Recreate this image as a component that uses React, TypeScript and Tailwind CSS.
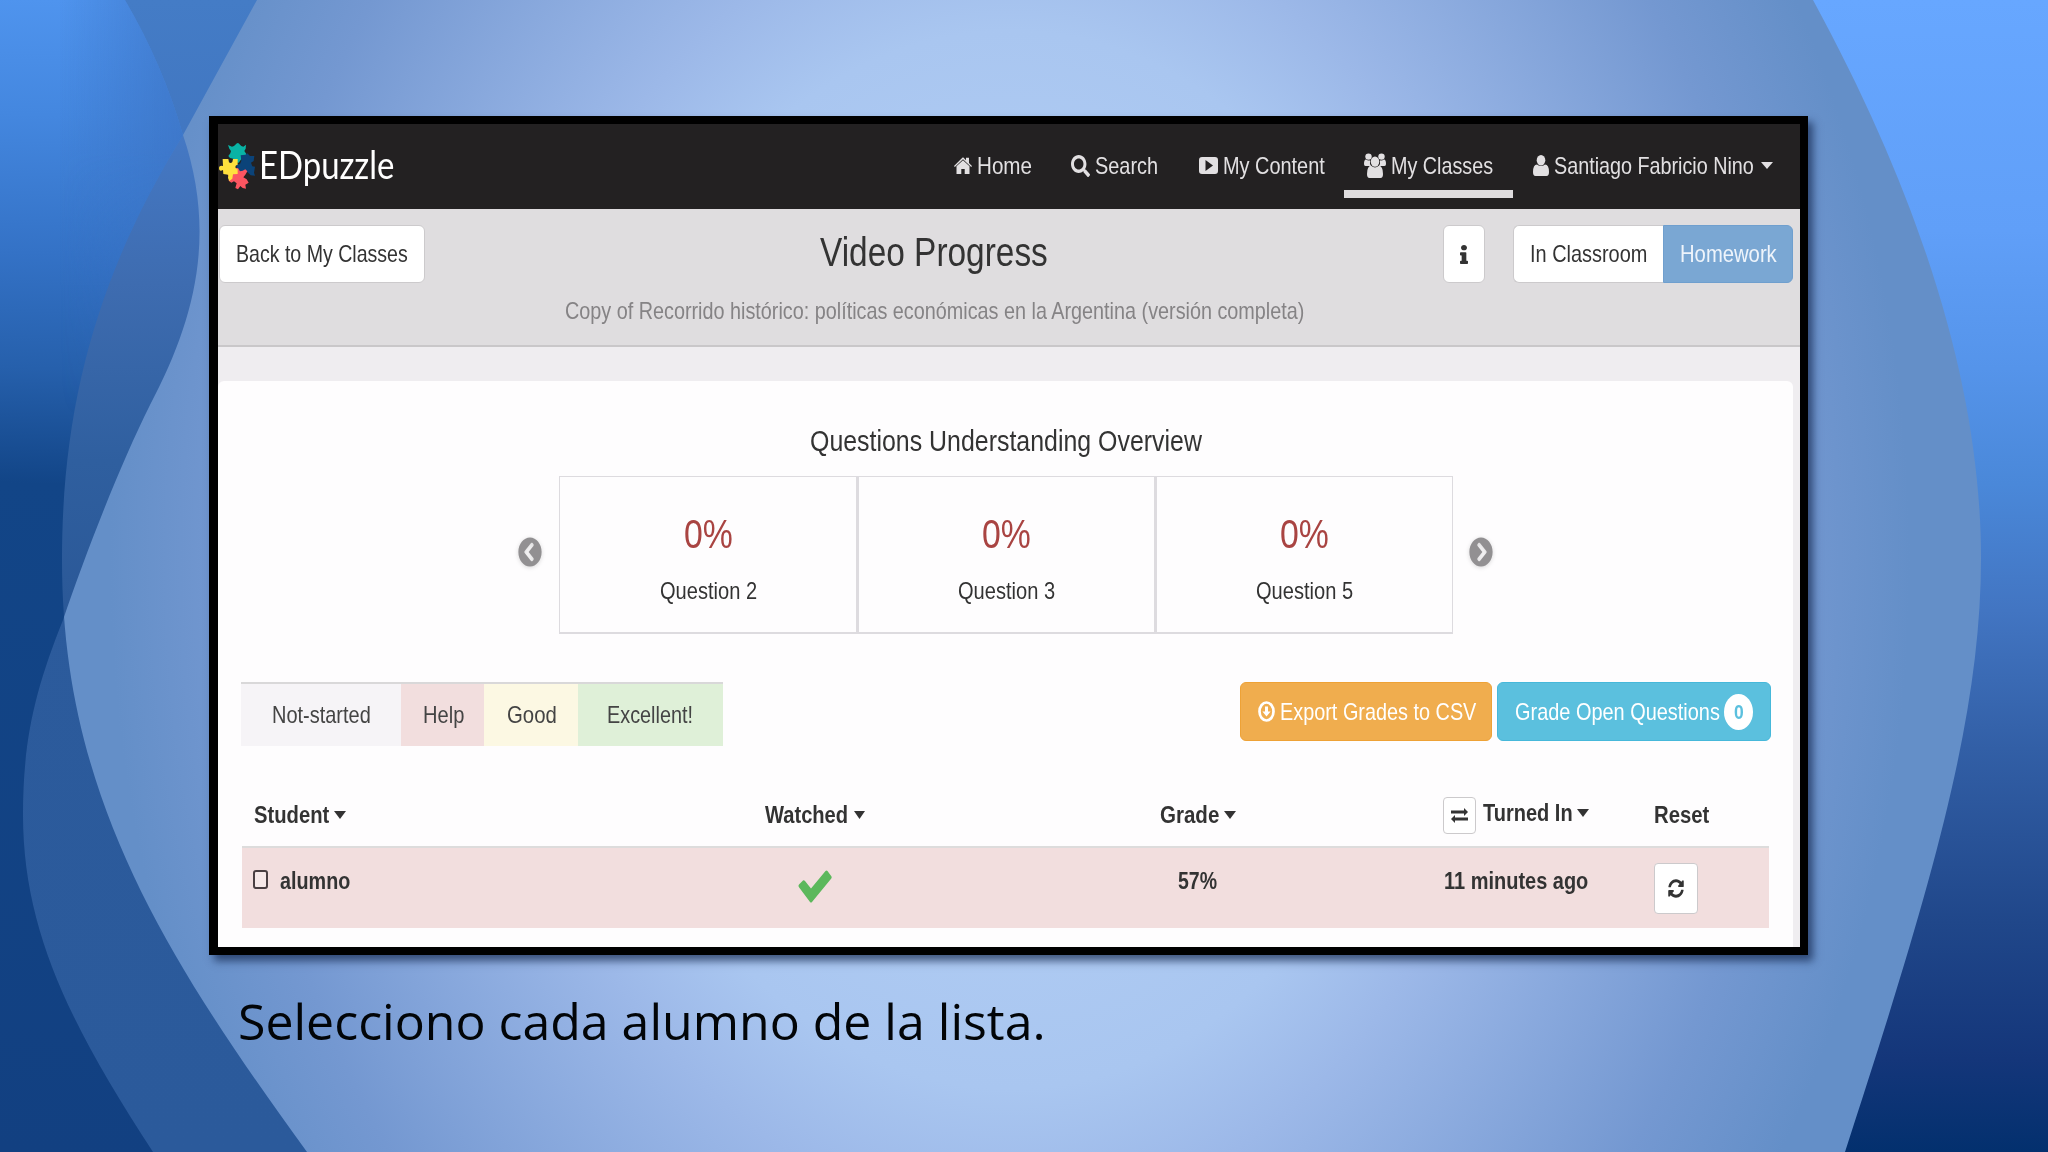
import { ReactNode, useLayoutEffect, useRef, useState } from 'react'
import clsx from 'clsx'
import {
  FaChevronCircleLeft,
  FaChevronCircleRight,
  FaInfo,
  FaSearch,
  FaSyncAlt,
} from 'react-icons/fa'

interface FitProps {
  w: number
  className?: string
  children: ReactNode
}

// Condenses a line of text so that it takes exactly `w` pixels
function Fit({ w, className, children }: FitProps) {
  const ref = useRef<HTMLSpanElement>(null)
  const [scale, setScale] = useState(1)

  useLayoutEffect(() => {
    if (ref.current) setScale(w / ref.current.offsetWidth)
  }, [w])

  return (
    <span className={clsx('block shrink-0 whitespace-nowrap', className)} style={{ width: w }}>
      <span ref={ref} className="inline-block origin-left" style={{ transform: `scaleX(${scale})` }}>
        {children}
      </span>
    </span>
  )
}

function Caret({ className }: { className?: string }) {
  return (
    <svg viewBox="0 0 12 8" preserveAspectRatio="none" className={clsx('h-2 w-3 shrink-0', className)}>
      <path d="M0 0h12L6 8z" fill="currentColor" />
    </svg>
  )
}

function Logo() {
  return (
    <svg viewBox="27 33 108 141" preserveAspectRatio="none" className="h-[47px] w-9 shrink-0">
      <path
        d="M54 39L66 44Q73 43 76 38Q84 28 90 38Q93 43 100 44L108 38L107 50L103 57L109 66L106 75L98 78L92 84L86 92L72 90L70 80L60 78L55 72L61 64L63 57L58 50z"
        fill="#09b3a5"
      />
      <path
        d="M92 70L106 68L112 64L120 72L133 72L131 87L123 92L127 103L135 104L132 122L135 131L122 130L112 120L96 124L80 116L80 98L90 96L94 86z"
        fill="#0b4379"
      />
      <path
        d="M66 108H84L90 118L98 116L106 112L112 118L106 128L100 136L110 142L116 152L106 158L108 170L98 168L91 162L84 172L76 168L80 154L72 148L64 152L56 146L58 134L52 126z"
        fill="#fb5561"
      />
      <path
        d="M38 81H55L57 91Q62 96 67 90L69 81H83V98Q76 99 76 105T83 112V126L69 127L67 140L58 147L54 138L55 128L40 126L39 114Q27 120 27 107Q28 99 39 102z"
        fill="#ffe03d"
      />
    </svg>
  )
}

function HomeIcon() {
  return (
    <svg viewBox="0 0 18 17" preserveAspectRatio="none" className="h-[17px] w-[18px] shrink-0">
      <path d="M0 9L8.6.6q.4-.4.8 0L12 3.200V.8h3v5.300L18 9l-.8 1L9 2.300.8 10z" fill="currentColor" />
      <path d="M9 3.300l6.500 6V17h-4.800v-5H7.300v5H2.500V9.300z" fill="currentColor" />
    </svg>
  )
}

function PlayIcon() {
  return (
    <svg viewBox="0 0 19 17" preserveAspectRatio="none" className="h-[17px] w-[19px] shrink-0">
      <path
        d="M3 0h13q3 0 3 3v11q0 3-3 3H3q-3 0-3-3V3q0-3 3-3zM6.500 3v11l7.500-5.500z"
        fill="currentColor"
        fillRule="evenodd"
      />
    </svg>
  )
}

function GroupIcon() {
  return (
    <svg viewBox="0 0 22 25" preserveAspectRatio="none" className="h-[25px] w-[22px] shrink-0">
      <g fill="currentColor">
        <circle cx="4.500" cy="3.600" r="3.200" />
        <circle cx="17.500" cy="3.600" r="3.200" />
        <path d="M0 11q0-4.500 2-4.500 2 1.500 4 .8-.6 4 1.200 5.700H1.500Q0 13 0 11zM22 11q0-4.500-2-4.500-2 1.500-4 .8.600 4-1.200 5.700h5.700q1.500 0 1.500-2z" />
        <ellipse cx="11" cy="8.600" rx="4.300" ry="5.200" />
        <path d="M3 21q0-8 4.200-8.200 3.800 3.200 7.600 0Q19 13 19 21q0 4-2.500 4h-11Q3 25 3 21z" />
      </g>
    </svg>
  )
}

function UserIcon() {
  return (
    <svg viewBox="0 0 16 21" preserveAspectRatio="none" className="h-[21px] w-4 shrink-0">
      <ellipse cx="8" cy="5.300" rx="4.300" ry="5.300" fill="currentColor" />
      <path d="M0 17q0-7.500 4-7.600 4 3.200 8 0 4 .1 4 7.600 0 4-2.500 4h-11Q0 21 0 17z" fill="currentColor" />
    </svg>
  )
}

function DownloadIcon() {
  return (
    <svg viewBox="0 0 17 21" preserveAspectRatio="none" className="h-[21px] w-[17px] shrink-0">
      <ellipse cx="8.500" cy="10.500" rx="7" ry="9" fill="none" stroke="currentColor" strokeWidth="2.700" />
      <path d="M7 5.500h3v5h2.600l-4.100 5-4.100-5H7z" fill="currentColor" />
    </svg>
  )
}

function SwapIcon() {
  return (
    <svg viewBox="0 0 17 15" preserveAspectRatio="none" className="h-[15px] w-[17px]">
      <path d="M0 2.600h13V0l4 4-4 4V5.400H0zM17 9.600H4V7L0 11l4 4v-2.600h13z" fill="currentColor" />
    </svg>
  )
}

function CheckIcon() {
  return (
    <svg viewBox="0 0 34 33" preserveAspectRatio="none" className="h-[33px] w-[34px]">
      <path
        d="M1 14.500L5 10.500Q6 10 7 11L13 18.500L27.500 1Q28.500 0 29.500 1L33.500 6.500Q34 7.500 33.300 8.500L14 32Q13 33 12 32L.8 17Q0 15.700 1 14.500z"
        fill="#5cb85c"
      />
    </svg>
  )
}

function Backdrop() {
  return (
    <svg viewBox="0 0 2048 1152" preserveAspectRatio="none" className="absolute inset-0 h-full w-full">
      <defs>
        <radialGradient id="glow" gradientUnits="userSpaceOnUse" cx="0" cy="0" r="1" gradientTransform="translate(1010 560) scale(900 1150)">
          <stop offset="0" stopColor="#b9d4f8" />
          <stop offset="0.460" stopColor="#a9c6f0" />
          <stop offset="0.570" stopColor="#9cb8e8" />
          <stop offset="0.860" stopColor="#7498d1" />
          <stop offset="1" stopColor="#648fc8" />
        </radialGradient>
        <linearGradient id="right" x1="0" y1="0" x2="0" y2="1">
          <stop offset="0" stopColor="#67a7ff" />
          <stop offset="0.200" stopColor="#609ff8" />
          <stop offset="0.320" stopColor="#5594ea" />
          <stop offset="0.420" stopColor="#4a88d9" />
          <stop offset="0.530" stopColor="#4275c2" />
          <stop offset="0.650" stopColor="#325fa6" />
          <stop offset="0.800" stopColor="#20478a" />
          <stop offset="0.920" stopColor="#14367a" />
          <stop offset="1" stopColor="#03306e" />
        </linearGradient>
        <linearGradient id="outer" x1="0" y1="0" x2="0" y2="1">
          <stop offset="0" stopColor="#447cc6" />
          <stop offset="0.150" stopColor="#4075c0" />
          <stop offset="0.420" stopColor="#2c5b9c" />
          <stop offset="1" stopColor="#2b5a9b" />
        </linearGradient>
        <linearGradient id="lens" gradientUnits="userSpaceOnUse" x1="0" y1="130" x2="0" y2="640">
          <stop offset="0" stopColor="#4579c5" />
          <stop offset="0.300" stopColor="#3e6cb0" />
          <stop offset="0.650" stopColor="#2f5f9f" />
          <stop offset="1" stopColor="#2a5796" />
        </linearGradient>
        <linearGradient id="inner" gradientUnits="userSpaceOnUse" x1="60" y1="0" x2="20" y2="1152">
          <stop offset="0" stopColor="#4f94ee" />
          <stop offset="0.100" stopColor="#4487df" />
          <stop offset="0.220" stopColor="#3472c6" />
          <stop offset="0.320" stopColor="#2660ac" />
          <stop offset="0.420" stopColor="#124587" />
          <stop offset="1" stopColor="#124081" />
        </linearGradient>
        <linearGradient id="fade" x1="0" y1="0" x2="1" y2="0">
          <stop offset="0.300" stopColor="#3c72c2" stopOpacity="0" />
          <stop offset="1" stopColor="#3c72c2" stopOpacity="0.750" />
        </linearGradient>
        <linearGradient id="fadeDown" gradientUnits="userSpaceOnUse" x1="0" y1="150" x2="0" y2="420">
          <stop offset="0" stopColor="#fff" />
          <stop offset="1" stopColor="#000" />
        </linearGradient>
        <mask id="topOnly">
          <rect width="210" height="460" fill="url(#fadeDown)" />
        </mask>
        <clipPath id="outerClip">
          <path d="M0 0H257L183 135C100 270 62 400 62 560C62 790 160 950 307 1152H0z" />
        </clipPath>
      </defs>
      <rect width="2048" height="1152" fill="url(#glow)" />
      <path d="M1813 0C1930 215 1981 400 1981 558C1981 720 1930 890 1845 1152H2048V0z" fill="url(#right)" />
      <path d="M0 0H257L183 135C100 270 62 400 62 560C62 790 160 950 307 1152H0z" fill="url(#outer)" />
      <path d="M0 0H125Q163 65 183 135C217 235 195 320 150 405C120 465 85 555 63 620C35 690 23 740 23 815C23 930 70 1025 153 1152H0z" fill="url(#lens)" />
      <g clipPath="url(#outerClip)">
        <path d="M0 0H125Q163 65 183 135C217 235 195 320 150 405C120 465 85 555 63 620C35 690 23 740 23 815C23 930 70 1025 153 1152H0z" fill="url(#inner)" />
        <path d="M0 0H125Q163 65 183 135C217 235 195 320 150 405L130 460H0z" fill="url(#fade)" mask="url(#topOnly)" />
      </g>
    </svg>
  )
}

function Navbar() {
  return (
    <nav className="flex h-[85px] items-center bg-[#232122] pl-px text-2xl leading-none text-[#e2e0e2]">
      <Logo />
      <Fit w={135} className="ml-1 pb-1 font-['Lato'] text-[39px] text-white">EDpuzzle</Fit>
      <div className="ml-[560px] flex h-full items-center pb-0.5">
        <HomeIcon />
        <Fit w={55} className="ml-[5px]">Home</Fit>
      </div>
      <div className="ml-[39px] flex h-full items-center pb-0.5">
        <FaSearch preserveAspectRatio="none" className="h-[22px] w-[19px] shrink-0" />
        <Fit w={63} className="ml-[5px]">Search</Fit>
      </div>
      <div className="ml-[41px] flex h-full items-center pb-0.5">
        <PlayIcon />
        <Fit w={102} className="ml-[5px]">My Content</Fit>
      </div>
      <div className="relative ml-[19px] flex h-full w-[169px] shrink-0 items-center pb-0.5 pl-5">
        <GroupIcon />
        <Fit w={102} className="ml-[5px]">My Classes</Fit>
        <div className="absolute bottom-[11px] left-0 h-2 w-full bg-[#dedcde]" />
      </div>
      <div className="ml-5 flex h-full items-center pb-0.5">
        <UserIcon />
        <Fit w={200} className="ml-[5px]">Santiago Fabricio Nino</Fit>
        <Caret className="ml-[7px] h-[7px]" />
      </div>
    </nav>
  )
}

function Subheader() {
  return (
    <div className="flex h-[138px] items-start justify-between border-b-2 border-[#c9c7c9] bg-[#dfdddf] pt-4 pr-[7px] pl-px text-2xl leading-none text-[#333]">
      <button className="flex h-[58px] w-[206px] items-center rounded-md border border-[#cccacc] bg-white pl-4">
        <Fit w={172}>Back to My Classes</Fit>
      </button>
      <div className="flex w-[740px] flex-col items-center pt-[7px]">
        <Fit w={228} className="text-[40px]">Video Progress</Fit>
        <Fit w={739} className="mt-[27px] text-[#858385]">
          Copy of Recorrido histórico: políticas económicas en la Argentina (versión completa)
        </Fit>
      </div>
      <div className="flex">
        <button className="flex h-[58px] w-[42px] items-center justify-center rounded-md border border-[#cccacc] bg-white">
          <FaInfo preserveAspectRatio="none" className="h-[19px] w-2" />
        </button>
        <div className="ml-7 flex">
          <button className="flex h-[58px] w-[150px] items-center rounded-l-md border border-r-0 border-[#cccacc] bg-white pl-4">
            <Fit w={117}>In Classroom</Fit>
          </button>
          <button className="flex h-[58px] w-[130px] items-center rounded-r-md border border-[#6f9fce] bg-[#7aa7d3] pl-4 text-[#eef4fb]">
            <Fit w={97}>Homework</Fit>
          </button>
        </div>
      </div>
    </div>
  )
}

const questions = ['Question 2', 'Question 3', 'Question 5']

function Overview() {
  return (
    <section className="flex flex-col pt-[45px] leading-none text-[#333]">
      <Fit w={392} className="ml-[592px] text-[30px]">Questions Understanding Overview</Fit>
      <div className="mt-5 ml-[300px] flex items-center">
        <FaChevronCircleLeft preserveAspectRatio="none" className="mb-[7px] h-[30px] w-6 text-[#929092] drop-shadow-sm" />
        <div className="ml-[17px] grid w-[894px] grid-cols-[299px_298px_1fr] border-x border-t border-b-2 border-[#dddbdf]">
          {questions.map((q, i) => (
            <div
              key={q}
              className={clsx('flex h-[155px] flex-col items-center pt-[37px]', i < 2 && 'border-r-[3px] border-[#dddbdf]')}
            >
              <Fit w={49} className="text-[40px] text-[#a94442]">0%</Fit>
              <Fit w={97} className="mt-[21px] text-2xl">{q}</Fit>
            </div>
          ))}
        </div>
        <FaChevronCircleRight preserveAspectRatio="none" className="mb-[7px] ml-4 h-[30px] w-6 text-[#929092] drop-shadow-sm" />
      </div>
    </section>
  )
}

function Toolbar() {
  return (
    <div className="mt-12 flex h-16 items-start justify-between pr-[22px] pl-[23px] text-2xl leading-none text-[#444]">
      <div className="flex h-16 items-center border-t-2 border-[#d9d8d9]">
        <div className="flex h-full w-40 items-center bg-[#f6f4f7] pl-[31px]">
          <Fit w={99}>Not-started</Fit>
        </div>
        <div className="flex h-full w-[83px] items-center bg-[#f2dede] pl-[22px]">
          <Fit w={41}>Help</Fit>
        </div>
        <div className="flex h-full w-[94px] items-center bg-[#fcf8e3] pl-[23px]">
          <Fit w={50}>Good</Fit>
        </div>
        <div className="flex h-full w-[145px] items-center bg-[#dff0d8] pl-[29px]">
          <Fit w={86}>Excellent!</Fit>
        </div>
      </div>
      <div className="flex gap-[5px] text-white">
        <button className="flex h-[59px] w-[252px] items-center rounded-md border border-[#eea236] bg-[#f0ad4e] pl-[17px]">
          <DownloadIcon />
          <Fit w={196} className="ml-[5px]">Export Grades to CSV</Fit>
        </button>
        <button className="flex h-[59px] w-[274px] items-center rounded-md border border-[#46b8da] bg-[#5bc0de] pl-[17px]">
          <Fit w={205}>Grade Open Questions</Fit>
          <span className="ml-1 flex h-9 w-[29px] items-center justify-center rounded-[50%] bg-white text-[21px] font-bold text-[#5bc0de]">
            <Fit w={10}>0</Fit>
          </span>
        </button>
      </div>
    </div>
  )
}

function StudentTable() {
  return (
    <div className="mt-[42px] ml-6 w-[1527px] text-2xl leading-none font-bold text-[#333]">
      <div className="grid h-[58px] grid-cols-[523px_395px_283px_211px_1fr]">
        <div className="flex items-center gap-[5px] pb-1 pl-3">
          <Fit w={75}>Student</Fit>
          <Caret />
        </div>
        <div className="flex items-center gap-1.5 pb-1">
          <Fit w={83}>Watched</Fit>
          <Caret className="w-[11px]" />
        </div>
        <div className="flex items-center gap-[5px] pb-1">
          <Fit w={59}>Grade</Fit>
          <Caret />
        </div>
        <div className="flex items-center pb-1">
          <button className="flex h-[37px] w-[33px] items-center justify-center rounded border border-[#cccacc] bg-white">
            <SwapIcon />
          </button>
          <Fit w={90} className="mb-1 ml-[7px]">Turned In</Fit>
          <Caret className="mb-1 ml-1" />
        </div>
        <div className="flex items-center pb-1">
          <Fit w={55}>Reset</Fit>
        </div>
      </div>
      <div className="grid h-[82px] grid-cols-[523px_395px_283px_211px_1fr] border-t-2 border-[#dddcdc] bg-[#f2dede]">
        <div className="flex items-start pt-[22px] pl-[11px]">
          <span className="h-[19px] w-[15px] rounded-[3px] border-2 border-[#4a3f42] bg-[#f6e8e8]" />
          <Fit w={70} className="-mt-px ml-3">alumno</Fit>
        </div>
        <div className="pt-[22px] pl-[33px]">
          <CheckIcon />
        </div>
        <div className="pt-[21px] pl-[18px]">
          <Fit w={39}>57%</Fit>
        </div>
        <div className="pt-[21px] pl-px">
          <Fit w={144}>11 minutes ago</Fit>
        </div>
        <div className="pt-[15px]">
          <button className="flex h-[51px] w-11 items-center justify-center rounded border border-[#cccacc] bg-white">
            <FaSyncAlt preserveAspectRatio="none" className="h-[19px] w-4" />
          </button>
        </div>
      </div>
    </div>
  )
}

export default function App() {
  return (
    <main className="relative h-[1152px] w-[2048px] overflow-hidden font-['Liberation_Sans',sans-serif]">
      <Backdrop />
      <div className="relative flex flex-col items-start pt-[116px] pl-[209px]">
        <div className="h-[839px] w-[1599px] overflow-hidden border-8 border-l-[9px] border-black bg-[#efedf0] shadow-[5px_6px_8px_rgba(20,40,80,0.7)]">
          <Navbar />
          <Subheader />
          <div className="mt-[34px] mr-[7px] h-[566px] rounded-t-md bg-[#fefdfe]">
            <Overview />
            <Toolbar />
            <StudentTable />
          </div>
        </div>
        <p className="mt-8 ml-[29px] font-['Open_Sans',sans-serif] text-[50px] leading-[68px] font-medium text-[#020508]">
          <Fit w={808}>Selecciono cada alumno de la lista.</Fit>
        </p>
      </div>
    </main>
  )
}
